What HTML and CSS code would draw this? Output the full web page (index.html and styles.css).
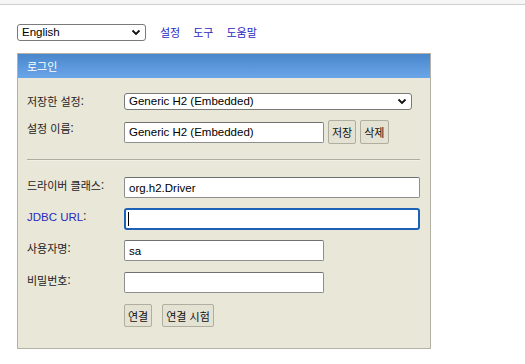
FILE: index.html
```html
<!DOCTYPE html>
<html lang="ko">
<head>
<meta charset="utf-8">
<title>H2 Console</title>
<link rel="stylesheet" href="styles.css">
</head>
<body>
<div class="topbar"></div>
<div class="page">
  <div class="toolbar">
    <span class="selwrap lang">
      <select class="sel"><option>English</option></select>
      <svg class="chev" width="10" height="7" viewBox="0 0 10 7"><path d="M1.5 1.5 L5 5 L8.5 1.5" fill="none" stroke="#111" stroke-width="1.8"/></svg>
    </span>
    <a class="link" href="#">설정</a>
    <a class="link" href="#">도구</a>
    <a class="link" href="#">도움말</a>
  </div>
  <div class="panel">
    <div class="panel-head">로그인</div>
    <div class="panel-body">
      <div class="row r1">
        <label class="lbl">저장한 설정:</label>
        <span class="selwrap saved">
          <select class="sel"><option>Generic H2 (Embedded)</option></select>
          <svg class="chev" width="10" height="7" viewBox="0 0 10 7"><path d="M1.5 1.5 L5 5 L8.5 1.5" fill="none" stroke="#111" stroke-width="1.8"/></svg>
        </span>
      </div>
      <div class="row r2">
        <label class="lbl">설정 이름:</label>
        <div class="ctl">
          <input class="inp short" value="Generic H2 (Embedded)">
          <button class="btn">저장</button>
          <button class="btn">삭제</button>
        </div>
      </div>
      <div class="sep"></div>
      <div class="row r3">
        <label class="lbl">드라이버 클래스:</label>
        <input class="inp long" value="org.h2.Driver">
      </div>
      <div class="row r4">
        <label class="lbl"><a class="jlink" href="#">JDBC URL</a>:</label>
        <span class="focuswrap">
          <input class="inp long focused" value="">
          <span class="caret"></span>
        </span>
      </div>
      <div class="row r5">
        <label class="lbl">사용자명:</label>
        <input class="inp short" value="sa">
      </div>
      <div class="row r6">
        <label class="lbl">비밀번호:</label>
        <input class="inp short" type="password" value="">
      </div>
      <div class="row r7">
        <span class="lbl"></span>
        <div class="ctl btns">
          <button class="btn">연결</button>
          <button class="btn">연결 시험</button>
        </div>
      </div>
    </div>
  </div>
</div>
</body>
</html>
```

FILE: styles.css
```css
html, body {
  margin: 0;
  padding: 0;
  background: #ffffff;
}
body {
  font-family: "Liberation Sans", "Noto Sans CJK KR", Arial, sans-serif;
  font-size: 12px;
  color: #111;
}
.topbar {
  height: 4px;
  background: #f6f6f6;
  border-bottom: 1px solid #cfcfcf;
}
.page {
  padding: 19px 17px 0 17px;
}
.toolbar {
  display: flex;
  align-items: center;
  height: 17px;
  gap: 13px;
}
.toolbar .lang {
  margin-right: 1px;
}
.selwrap {
  position: relative;
  display: inline-block;
  height: 17px;
}
.sel {
  appearance: none;
  -webkit-appearance: none;
  display: block;
  height: 17px;
  margin: 0;
  padding: 0 0 0 4px;
  border: 1px solid #7a7a7a;
  border-radius: 3px;
  background: #fff;
  font-family: "Liberation Sans", Arial, sans-serif;
  font-size: 11.5px;
  color: #000;
  box-sizing: border-box;
  line-height: 15px;
}
.lang .sel { width: 129px; }
.saved .sel { width: 288px; }
.chev {
  position: absolute;
  right: 5px;
  top: 5px;
  pointer-events: none;
}
.link {
  font-family: "Noto Sans CJK KR", sans-serif;
  font-size: 11px;
  color: #2a2ac0;
  text-decoration: none;
  line-height: 17px;
}
.panel {
  margin-top: 12px;
  width: 414px;
  border: 1px solid #b4b2a6;
  box-sizing: border-box;
  background: #e9e7d8;
}
.panel-head {
  height: 24px;
  line-height: 24px;
  padding-left: 9px;
  background: linear-gradient(#4a86cb, #6aa6e8);
  color: #fff;
  font-family: "Noto Sans CJK KR", sans-serif;
  font-size: 11px;
}
.panel-body {
  padding: 15px 10px 21px 9px;
}
.row {
  display: flex;
  align-items: flex-start;
}
.lbl {
  flex: 0 0 97px;
  width: 97px;
  font-family: "Noto Sans CJK KR", sans-serif;
  font-size: 11px;
  line-height: 16px;
  color: #222;
}
.r1 { height: 17px; }
.r2 { margin-top: 10px; height: 24px; }
.r3 { margin-top: 16px; height: 21px; }
.r4 { margin-top: 10px; height: 22px; }
.r5 { margin-top: 10px; height: 21px; }
.r6 { margin-top: 11px; height: 21px; }
.r7 { margin-top: 11px; height: 23px; }
.r2 .lbl { margin-top: 0; }
.ctl {
  display: flex;
  align-items: center;
  height: 100%;
  gap: 4px;
}
.btns { gap: 10px; }
.inp {
  display: block;
  box-sizing: border-box;
  height: 21px;
  margin: 0;
  padding: 0 4px;
  border: 1px solid #8e8e8e;
  border-top-color: #707070;
  border-radius: 2px;
  background: #fff;
  font-family: "Liberation Sans", Arial, sans-serif;
  font-size: 11.5px;
  color: #000;
  outline: none;
}
.short { width: 200px; }
.long { width: 296px; }
.r3 .inp, .r5 .inp, .r6 .inp { margin-top: 0; }
.btn {
  height: 24px;
  margin: 0;
  padding: 0 3px;
  border: 1px solid #b0ae9f;
  border-radius: 2px;
  background: #e4e2d3;
  font-family: "Noto Sans CJK KR", sans-serif;
  font-size: 11px;
  color: #111;
  box-sizing: border-box;
}
.r7 .btn { height: 23px; }
.sep {
  margin-top: 15px;
  height: 1px;
  background: #aeaca0;
  border-bottom: 1px solid #f2f0e4;
}
.focuswrap {
  position: relative;
  display: block;
}
.focused {
  height: 22px;
  border: 2px solid #1d62b8;
  border-radius: 3px;
}
.caret {
  position: absolute;
  left: 4px;
  top: 4px;
  width: 1px;
  height: 14px;
  background: #000;
}
.jlink {
  color: #2a2ac0;
  text-decoration: none;
  font-family: "Liberation Sans", Arial, sans-serif;
  font-size: 11.5px;
}
```
